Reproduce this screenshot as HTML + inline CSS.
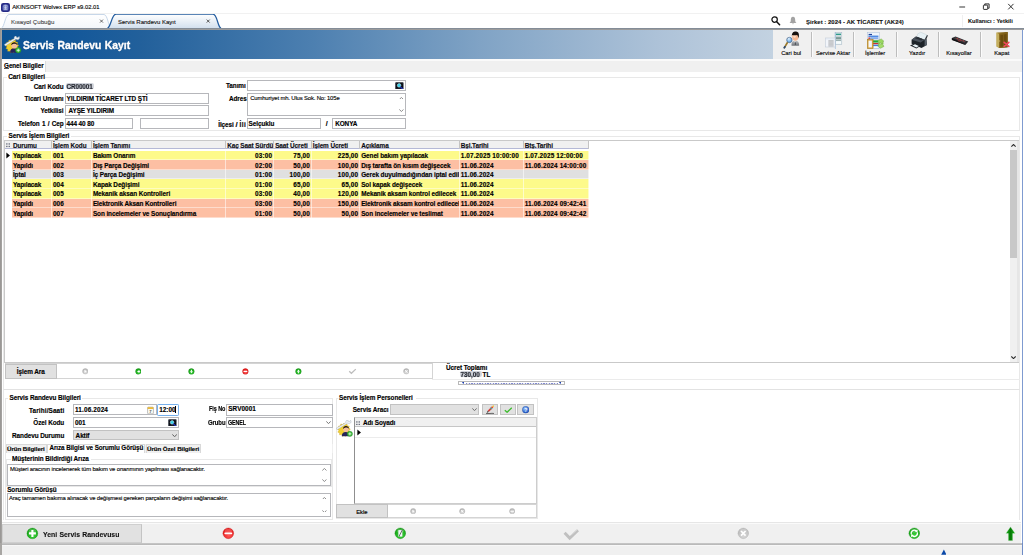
<!DOCTYPE html><html lang="tr"><head><meta charset="utf-8"><title>Servis Randevu Kayıt</title><style>
html,body{margin:0;padding:0;background:#fff;}
body{width:1024px;height:557px;position:relative;overflow:hidden;font-family:"Liberation Sans",sans-serif;font-size:6.2px;color:#000;}
div,svg{position:absolute;box-sizing:border-box;}
.t{white-space:nowrap;}
.b{font-weight:bold;font-size:6.4px;letter-spacing:-0.08px;color:#000;-webkit-text-stroke:0.14px #000;}
.n{font-weight:normal;font-size:5.8px;color:#111;-webkit-text-stroke:0.14px #111;}
.in{background:#fff;border:0.8px solid #b6b7bb;}
.g{background:#e1e1e1;border:0.7px solid #c2c2c2;}
.ln{background:#dcdcdc;}
</style></head><body>
<svg style="left:1px;top:2.500px" width="9" height="9" viewBox="0 0 18 18"><rect x="0" y="0" width="18" height="18" rx="4.500" fill="#262a86"/><rect x="3.200" y="3.200" width="11.600" height="11.600" rx="3" fill="#6f7cc0"/><path d="M5.500 6.500l3.500-2 3.500 2M6 9.500h6M6 12.500h6M9 5v8" stroke="#dfe3f6" stroke-width="1.200" fill="none"/></svg>
<div class="t n" style="left:12.2px;top:3.45px;line-height:8px;font-size:5.85px;color:#000;">AKINSOFT Wolvex ERP s9.02.01</div>
<svg style="left:955px;top:1px" width="64" height="12" viewBox="0 0 64 12"><path d="M4.300 6h5.800" stroke="#111" stroke-width="0.85" fill="none"/><rect x="28.400" y="4.100" width="4.300" height="4.300" rx=".6" fill="none" stroke="#111" stroke-width="0.85"/><path d="M29.800 4.100v-1.200h4.300v4.300h-1.300" fill="none" stroke="#111" stroke-width="0.85"/><path d="M53.200 2.900l5.300 5.500M58.500 2.900l-5.300 5.500" stroke="#111" stroke-width="0.85" fill="none"/></svg>
<svg style="left:0;top:13px" width="240" height="16" viewBox="0 0 240 16">
<defs><linearGradient id="tg" x1="0" y1="0" x2="0" y2="1"><stop offset="0" stop-color="#ffffff"/><stop offset="1" stop-color="#d3e0ee"/></linearGradient>
<linearGradient id="tg0" x1="0" y1="0" x2="0" y2="1"><stop offset="0" stop-color="#ffffff"/><stop offset="1" stop-color="#f3f6fa"/></linearGradient></defs>
<path d="M1.5 15 C4.5 14 5 2 9 1.5 L104 1.5 C108 2 108 14 111.5 15" fill="url(#tg0)" stroke="#b9cde3" stroke-width="0.8"/>
<path d="M107.5 15.2 C111 14 111.5 1.5 116 1.2 L213 1.2 C217.5 1.5 217.5 14 221 15.2" fill="url(#tg)" stroke="#235c9f" stroke-width="1.25"/>
<path d="M100 6.600l3 3M103 6.600l-3 3" stroke="#444" stroke-width="0.8"/>
<path d="M206.700 6.600l3 3M209.700 6.600l-3 3" stroke="#333" stroke-width="0.8"/>
</svg>
<div class="t n" style="left:11px;top:17.85px;line-height:8px;font-size:6.15px;color:#777;">Kısayol Çubuğu</div>
<div class="t n" style="left:118px;top:17.95px;line-height:8px;font-size:6.0px;color:#222;">Servis Randevu Kayıt</div>
<svg style="left:770px;top:15px" width="30" height="12" viewBox="0 0 30 12"><circle cx="4.6" cy="4.6" r="2.7" fill="none" stroke="#111" stroke-width="1.2"/><path d="M6.7 6.8l2.9 3" stroke="#111" stroke-width="1.5" stroke-linecap="round"/><path d="M23 1.8c1.8 0 2.2 1.8 2.2 3.4 0 1.5 .6 2.2 1.3 2.8h-7c.7-.6 1.3-1.3 1.3-2.8 0-1.6 .4-3.4 2.2-3.4zM22.1 8.6h1.8c0 1-1.8 1-1.8 0z" fill="#a3a3a3"/></svg>
<div class="t b" style="left:806px;top:17.55px;line-height:8px;font-size:6.0px;color:#111;-webkit-text-stroke:0.08px #111;letter-spacing:0;">Şirket : 2024 - AK TİCARET (AK24)</div>
<div class="" style="left:962px;top:15px;width:0.7px;height:12px;background:#efefef;"></div>
<div class="" style="left:0px;top:13.1px;width:1024px;height:0.7px;background:#f1f1f1;"></div>
<div class="t b" style="left:968px;top:17.25px;line-height:8px;font-size:5.65px;color:#111;-webkit-text-stroke:0.08px #111;letter-spacing:0;">Kullanıcı : Yetkili</div>
<div class="" style="left:0px;top:27.9px;width:1024px;height:2px;background:linear-gradient(180deg,#7b8998 0%,#8a9098 45%,#a9a49e 100%);"></div>
<div class="" style="left:0px;top:28px;width:1.6px;height:527px;background:linear-gradient(90deg,#9a9896 0 65%,#bdbbb9 100%);"></div>
<div class="" style="left:1022px;top:29.5px;width:0.9px;height:514px;background:#7f9bd0;"></div>
<div class="" style="left:1.6px;top:29.8px;width:771.4px;height:29.3px;background:linear-gradient(90deg,#0b5294 0%,#12579a 8%,#22609b 18%,#4c7fb0 40%,#80a3c5 62%,#adc2d8 85%,#c3d2e1 100%);"></div>
<div class="" style="left:772.8px;top:29.5px;width:249px;height:29.6px;background:#f0f0f0;"></div>
<div class="" style="left:1.6px;top:59px;width:1020.4px;height:2px;background:#fafafa;"></div>
<svg style="left:3.6px;top:36.3px" width="18" height="18" viewBox="0 0 36 36">
<path d="M17 5l2.200 3.200 3.600-1.400.6 3.800 3.800.4-1.200 3.600 3.200 2-2.600 2.800 2 3.200-3.600 1.400.2 3.800-3.800-.4-1.600 3.400-3-2.200-3 2.200-1.600-3.400-3.800.4.2-3.800-3.600-1.400 2-3.200-2.600-2.800 3.200-2-1.200-3.600 3.800-.4.6-3.800 3.600 1.400z" fill="#f0d030" stroke="#c8a018" stroke-width=".8" transform="translate(-1.500,1) scale(1.060)"/>
<path d="M12 33.500c0-6.500 3-9 8-9s6 2.500 6 9z" fill="#26245a"/>
<circle cx="20.500" cy="19" r="5.800" fill="#f4bf9c"/>
<path d="M14.300 18.500c.2-7.500 11.500-8.500 12.700 0-2.500-3.500-7.500-4.500-12.700 0z" fill="#1a120c"/>
<path d="M0.500 16.800L20.500 5.200c-1.200-2.800 1-5.200 3.800-5.400l.6 2.800 3.200.4 2-2.400c1.800 2.400 1 5.800-2.200 6.800-1.600.5-3 .1-4-.8L2.500 20.200z" fill="#eef1f5" stroke="#8f99a6" stroke-width=".7"/>
<circle cx="28.500" cy="28.500" r="5.400" fill="#3bb83b" stroke="#1d7f1d" stroke-width=".9"/>
<path d="M25.500 28.500h6M28.500 25.500v6" stroke="#e4f6e4" stroke-width="1.800"/>
</svg>
<div class="t" style="left:22.5px;top:37px;line-height:16px;font-size:11.1px;font-weight:bold;color:#fff;-webkit-text-stroke:0.35px #fff;word-spacing:0.6px;transform-origin:0 50%;transform:scaleX(0.935);text-shadow:0.3px 0.4px 0.8px rgba(0,0,40,.4);">Servis Randevu Kayıt</div>
<div class="" style="left:811.2px;top:32px;width:0.8px;height:25px;background:#bdbdbd;"></div>
<div class="" style="left:812.0px;top:32px;width:0.6px;height:25px;background:#fbfbfb;"></div>
<div class="" style="left:853.4px;top:32px;width:0.8px;height:25px;background:#bdbdbd;"></div>
<div class="" style="left:854.1999999999999px;top:32px;width:0.6px;height:25px;background:#fbfbfb;"></div>
<div class="" style="left:895.9px;top:32px;width:0.8px;height:25px;background:#bdbdbd;"></div>
<div class="" style="left:896.6999999999999px;top:32px;width:0.6px;height:25px;background:#fbfbfb;"></div>
<div class="" style="left:938.0px;top:32px;width:0.8px;height:25px;background:#bdbdbd;"></div>
<div class="" style="left:938.8px;top:32px;width:0.6px;height:25px;background:#fbfbfb;"></div>
<div class="" style="left:980.2px;top:32px;width:0.8px;height:25px;background:#bdbdbd;"></div>
<div class="" style="left:981.0px;top:32px;width:0.6px;height:25px;background:#fbfbfb;"></div>
<div class="t n" style="left:766.2px;top:49.45px;line-height:8px;width:50px;text-align:center;font-size:5.8px;color:#000;">Cari bul</div>
<div class="t n" style="left:808px;top:49.45px;line-height:8px;width:50px;text-align:center;font-size:5.8px;color:#000;">Servise Aktar</div>
<div class="t n" style="left:850.1px;top:49.45px;line-height:8px;width:50px;text-align:center;font-size:5.8px;color:#000;">İşlemler</div>
<div class="t n" style="left:892.1px;top:49.45px;line-height:8px;width:50px;text-align:center;font-size:5.8px;color:#000;">Yazdır</div>
<div class="t n" style="left:933.9px;top:49.45px;line-height:8px;width:50px;text-align:center;font-size:5.8px;color:#000;">Kısayollar</div>
<div class="t n" style="left:976.8px;top:49.45px;line-height:8px;width:50px;text-align:center;font-size:5.8px;color:#000;">Kapat</div>
<svg style="left:776px;top:30px" width="32" height="22" viewBox="0 0 32 22"><defs><radialGradient id="lens" cx=".4" cy=".35" r=".7"><stop offset="0" stop-color="#d4ecff"/><stop offset="1" stop-color="#3f8fd8"/></radialGradient>
<linearGradient id="suit" x1="0" y1="0" x2="0" y2="1"><stop offset="0" stop-color="#b9bcc0"/><stop offset="1" stop-color="#6f7378"/></linearGradient></defs>
<path d="M15.400 15.400c0-3.200 1.400-4.600 3.900-4.600s3.900 1.400 3.900 4.600c-1.500.5-6.300.5-7.800 0z" fill="url(#suit)"/>
<path d="M18.400 10.900l.9 2.400.9-2.400z" fill="#f4f4f4"/><path d="M19.100 11.600h.4l.3 2.900-.5.600-.5-.6z" fill="#3a3d44"/>
<ellipse cx="19.300" cy="7" rx="3.100" ry="3.700" fill="#f6b892"/>
<ellipse cx="18.600" cy="6.200" rx="1.300" ry="1.700" fill="#fde0cc" opacity=".8"/>
<path d="M15.900 6.200c-.3-3.600 2.200-4.900 4.300-4.600 2 .2 3 1.700 2.700 4.500-.1 1-.4 1.800-.7 2.300.1-1.600-.3-2.900-1.200-3.500-1.300.6-3.400.5-4.600.2-.3.400-.4.800-.5 1.100z" fill="#15110f"/>
<path d="M11.300 12.700L8.400 17.600" stroke="#9c7a2c" stroke-width="1.700" stroke-linecap="round"/>
<path d="M8.900 16.800l-.6 1" stroke="#2a4a78" stroke-width="1.700" stroke-linecap="round"/>
<circle cx="13.400" cy="10" r="2.700" fill="url(#lens)" stroke="#5a6f8a" stroke-width=".7"/>
<path d="M12 9.300a1.800 1.800 0 0 1 1.600-1.200" stroke="#fff" stroke-width=".6" fill="none" opacity=".9"/></svg>
<svg style="left:818px;top:30px" width="32" height="22" viewBox="0 0 32 22"><rect x="17.100" y="2.500" width="6.700" height="12" fill="#e8f0f1" stroke="#9fb4c4" stroke-width=".5"/>
<rect x="17.900" y="3.600" width="5.100" height="1.500" fill="#2f9a8c"/>
<rect x="17.900" y="5.700" width="5.100" height="1" fill="#b9c6c8"/>
<rect x="17.900" y="7.200" width="5.100" height="1.700" fill="#6f8f8c"/>
<rect x="17.900" y="9.500" width="5.100" height="1.300" fill="#8ea5a4"/>
<rect x="17.900" y="11.400" width="5.100" height="2.300" fill="#f6fbfc"/>
<path d="M17.400 2.500v16.500" stroke="#8fb3d6" stroke-width=".6"/>
<rect x="7.300" y="8" width="9.800" height="9" fill="#f2f5fa" stroke="#b8c2d0" stroke-width=".5"/>
<rect x="7.600" y="8.300" width="9.200" height="1.100" fill="#dfe6f0"/>
<rect x="10.400" y="10" width="5.200" height="6.700" fill="#c3c5c9"/>
<path d="M10.400 11.200h5.200M10.400 12.600h5.200M10.400 14h5.200M10.400 15.400h5.200" stroke="#d9dbde" stroke-width=".4"/></svg>
<svg style="left:860px;top:30px" width="32" height="22" viewBox="0 0 32 22"><rect x="7.300" y="2.500" width="12.400" height="15.800" fill="#eef4fb" stroke="#a9bcd6" stroke-width=".5"/>
<rect x="8.600" y="3.900" width="3.400" height="1.200" fill="#1c3f9a"/>
<rect x="8.400" y="5.600" width="10" height="1.300" fill="#3f7fe0"/>
<rect x="8.400" y="7.400" width="2" height="2.400" fill="#d04040"/><rect x="10.600" y="7.400" width="7.800" height="1.300" fill="#5a90e4"/>
<rect x="12.600" y="9.700" width="6.400" height="8.500" fill="#f6f8fc" stroke="#a9bcd6" stroke-width=".4"/>
<rect x="13" y="10.300" width="5.600" height="2.300" fill="#1fa83a"/>
<rect x="13" y="13" width="5.600" height="1.300" fill="#c83232"/>
<rect x="13" y="14.700" width="5.600" height="1.400" fill="#3f7fe0"/>
<rect x="7.300" y="9.200" width="5.800" height="9.400" fill="#d9a63c" stroke="#a87818" stroke-width=".5"/>
<rect x="8.500" y="10.600" width="3.400" height="6.800" fill="#f4f6fa"/>
<rect x="9.200" y="8.700" width="2" height="1.100" fill="#8f96a4"/>
<path d="M17.600 10.800l3.600-1.900 2.700 2.300-1.300.7 1 1.300-1.700 1-1-1.400-1.600.8z" fill="#9bd860" stroke="#5aa02c" stroke-width=".4"/>
<path d="M24 16.400l-3.600 1.900-2.700-2.300 1.300-.7-1-1.300 1.700-1 1 1.400 1.600-.8z" fill="#a4dc6a" stroke="#5aa02c" stroke-width=".4"/></svg>
<svg style="left:902px;top:30px" width="32" height="22" viewBox="0 0 32 22"><path d="M15.400 4.200l3.300-2 6.300 2.800-2.800 5.600-6.800-2.200z" fill="#e6f0f4" stroke="#b5c4cc" stroke-width=".4"/>
<path d="M22.200 10.400l2.800-5.500 .9 .5-2.300 5.500z" fill="#2b3036"/>
<path d="M9.600 9.800l4.400-3.200 8.600 3.200 1.800-.9 .5 6-5.400 3.200-9.900-4.300z" fill="#1d2329"/>
<path d="M9.600 9.800l4.400-3.200 8.600 3.200-4 2.600z" fill="#4a525c"/>
<path d="M13 8.200l2.400-1.200 5.800 2.200-2 1.300z" fill="#2a3038"/>
<path d="M22.600 9.800l1.800-.9 .5 6-2.300 1.400z" fill="#59626c"/>
<path d="M8 15.600l4.200-2 5.800 2.600-3.600 2.400z" fill="#23282e"/>
<path d="M10.400 15.500l2.600-1.200 3.800 1.700-2.400 1.500z" fill="#e8f2f6"/></svg>
<svg style="left:944px;top:30px" width="32" height="22" viewBox="0 0 32 22"><path d="M7.900 8l3.600-1.400 12.600 4.800-2.800 3.300-13.400-5z" fill="#2c2c30"/>
<path d="M7.900 8.100v1.800l13.400 5 2.800-3.300v-.4l-2.800 3.300z" fill="#121214"/>
<path d="M9.600 8l2-.7 10.400 4-1.300 1.500z" fill="#4a4448"/>
<path d="M12.600 8.400l1.600.6M15.400 9.600l2.200.9M18.800 10.600l1.600.6" stroke="#c43a3a" stroke-width=".9"/>
<path d="M13.800 10.400l2.400.9" stroke="#a03030" stroke-width=".8"/></svg>
<svg style="left:986px;top:30px" width="32" height="22" viewBox="0 0 32 22"><defs><linearGradient id="door" x1="0" y1="0" x2="1" y2="0"><stop offset="0" stop-color="#bda450"/><stop offset=".18" stop-color="#9a7c2a"/><stop offset="1" stop-color="#6c5010"/></linearGradient></defs>
<path d="M10.500 2.600l11.200-.6v15.200l-8.400 .8-2.800-1.400z" fill="url(#door)"/>
<path d="M10.500 2.600l2.800 1.400v14l-2.800-1.400z" fill="#c4ae5e"/>
<path d="M13.300 4l8.400-2v15.200l-8.400 .8z" fill="#806018"/>
<path d="M14.400 5.200l2.600-.5v11.700l-2.600 .3zM17.800 4.500l2.800-.6v12l-2.800 .4z" fill="#6a4c0e"/>
<path d="M13.700 10.200v1.600" stroke="#e0d090" stroke-width=".5"/>
<path d="M18.200 12.300l4.600 4.100M22.800 12.300l-4.600 4.100" stroke="#f0485a" stroke-width="1.700" stroke-linecap="round"/></svg>
<div class="" style="left:1.6px;top:61px;width:1020.4px;height:10.6px;background:#f0f0f0;"></div>
<div class="" style="left:1.6px;top:60.6px;width:44.8px;height:11px;background:#fff;border-right:0.7px solid #dcdcdc;"></div>
<div class="t b" style="left:4.1px;top:61.95px;line-height:8px;font-size:6.3px;">Genel Bilgiler</div>
<div class="" style="left:4.3px;top:68.3px;width:4.4px;height:0.45px;background:#555;"></div>
<div class="" style="left:3.2px;top:77.1px;width:1016.8px;height:54.2px;border:0.8px solid #e8e8e8;"></div>
<div class="" style="left:6.800000000000001px;top:74.1px;width:38.5px;height:6px;background:#fff;"></div>
<div class="t b" style="left:8.3px;top:73.05px;line-height:8px;">Cari Bilgileri</div>
<div class="t b" style="right:960.5px;top:82.55px;line-height:8px;">Cari Kodu</div>
<div class="" style="left:66px;top:83.4px;width:27.5px;height:5.8px;background:#d4d7de;border-radius:2px;filter:blur(0.5px);"></div>
<div class="t b" style="left:66.4px;top:82.55px;line-height:8px;font-size:6.4px;color:#2a2f3c;filter:blur(0.35px);letter-spacing:-0.1px;text-shadow:0 0 0.5px #fff,0 0 1.2px #8a90a0;">CR00001</div>
<div class="t b" style="right:960.5px;top:94.75px;line-height:8px;">Ticari Unvanı</div>
<div class="in" style="left:65px;top:92.8px;width:143.7px;height:11.1px;"></div>
<div class="t b" style="left:66.5px;top:94.75px;line-height:8px;">YILDIRIM TİCARET LTD ŞTİ</div>
<div class="t b" style="right:960.5px;top:106.85px;line-height:8px;">Yetkilisi</div>
<div class="in" style="left:65px;top:105.2px;width:143.7px;height:11.2px;"></div>
<div class="t b" style="left:68.5px;top:106.85px;line-height:8px;">AYŞE YILDIRIM</div>
<div class="t b" style="right:960.5px;top:119.95px;line-height:8px;word-spacing:0.6px;">Telefon 1 / Cep</div>
<div class="in" style="left:65px;top:118.1px;width:67.7px;height:10.7px;"></div>
<div class="t b" style="left:66.5px;top:119.95px;line-height:8px;">444 40 80</div>
<div class="in" style="left:140px;top:118.1px;width:68.7px;height:10.7px;"></div>
<div style="left:200px;top:78px;width:47.3px;height:52px;overflow:hidden;">
<div class="t b" style="left:26px;top:4px;line-height:8px;">Tanımı</div>
<div class="t b" style="left:29px;top:17.35px;line-height:8px;">Adres</div>
<div class="t b" style="left:18.2px;top:42.9px;line-height:8px;">İlçesi<span style="font-size:7.8px;margin:0 2px 0 1.700px;">/</span><span style="letter-spacing:0.500px;">İli</span></div>
</div>
<div class="in" style="left:246.9px;top:80.1px;width:159.4px;height:10.9px;"></div>
<svg style="left:395.3px;top:81.8px" width="8.8" height="7.6" viewBox="0 0 17.600 15.200"><rect x="0.500" y="0.500" width="16.600" height="14.200" rx="1.500" fill="#1e2430"/><path d="M2 13V5l2.500-3h3l1 2.500h1l1-2.500h3L16 5v8z" fill="#0c0f16"/><circle cx="8.200" cy="6.800" r="3.600" fill="#35d0e8" stroke="#d8f4fa" stroke-width="1"/><path d="M10.800 9.600l4.600 4.400" stroke="#2438c8" stroke-width="2.200" stroke-linecap="round"/></svg>
<div class="in" style="left:246.9px;top:93.3px;width:159.4px;height:22.6px;"></div>
<div class="t n" style="left:250.2px;top:94.35px;line-height:8px;font-size:5.9px;letter-spacing:-0.14px;color:#000;">Cumhuriyet mh. Ulus Sok. No: 105e</div>
<svg style="left:398.8px;top:96.52px" width="4.8" height="2.96" viewBox="0 0 6 3.7"><path d="M0.4 3.1L3 0.6L5.6 3.1" fill="none" stroke="#6e6e6e" stroke-width="1.0"/></svg>
<svg style="left:398.8px;top:109.32px" width="4.8" height="2.96" viewBox="0 0 6 3.7"><path d="M0.4 0.6L3 3.1L5.6 0.6" fill="none" stroke="#6e6e6e" stroke-width="1.0"/></svg>
<div class="in" style="left:246.9px;top:118.3px;width:73.7px;height:10.8px;"></div>
<div class="t b" style="left:248.6px;top:119.55px;line-height:8px;">Selçuklu</div>
<div class="t b" style="left:325.8px;top:119.85px;line-height:8px;font-size:7px;">/</div>
<div class="in" style="left:332.2px;top:118.3px;width:74.1px;height:10.8px;"></div>
<div class="t b" style="left:335.2px;top:119.55px;line-height:8px;">KONYA</div>
<div class="" style="left:3.2px;top:135.6px;width:1016.8px;height:254px;border:0.8px solid #e8e8e8;border-bottom-color:#e2e2e2;"></div>
<div class="" style="left:3.2px;top:389.6px;width:1016.8px;height:130.2px;border:0.8px solid #e8e8e8;border-bottom:none;border-top:none;"></div>
<div class="" style="left:7px;top:132.5px;width:64px;height:6px;background:#fff;"></div>
<div class="t b" style="left:8.5px;top:132.15px;line-height:8px;">Servis İşlem Bilgileri</div>
<div class="" style="left:4px;top:140px;width:1015px;height:222.6px;border:0.8px solid #c9c9c9;background:#fff;"></div>
<div class="" style="left:4.8px;top:141.2px;width:584.3px;height:8.3px;background:#f0f0f0;border-bottom:0.8px solid #b5b9d6;"></div>
<svg style="left:6px;top:143px" width="4.4" height="4.6" viewBox="0 0 4.4 4.6"><g fill="#5c6272"><rect x="0.2" y="0.3" width="1.3" height="1.3"/><rect x="2.6" y="0.3" width="1.3" height="1.3"/><rect x="0.2" y="2.8" width="1.3" height="1.3"/><rect x="2.6" y="2.8" width="1.3" height="1.3"/></g></svg>
<div style="left:11.7px;top:141.2px;width:40.0px;height:8.3px;overflow:hidden;border-right:0.8px solid #c4c4c4;"><div class="t b" style="left:1.2px;top:1.1px;line-height:8px;color:#10101c;">Durumu</div></div>
<div style="left:51.7px;top:141.2px;width:40.0px;height:8.3px;overflow:hidden;border-right:0.8px solid #c4c4c4;"><div class="t b" style="left:1.2px;top:1.1px;line-height:8px;color:#10101c;">İşlem Kodu</div></div>
<div style="left:91.7px;top:141.2px;width:134.3px;height:8.3px;overflow:hidden;border-right:0.8px solid #c4c4c4;"><div class="t b" style="left:1.2px;top:1.1px;line-height:8px;color:#10101c;">İşlem Tanımı</div></div>
<div style="left:226px;top:141.2px;width:48px;height:8.3px;overflow:hidden;border-right:0.8px solid #c4c4c4;"><div class="t b" style="left:1.2px;top:1.1px;line-height:8px;color:#10101c;">Kaç Saat Sürdü</div></div>
<div style="left:274px;top:141.2px;width:37.6px;height:8.3px;overflow:hidden;border-right:0.8px solid #c4c4c4;"><div class="t b" style="left:1.2px;top:1.1px;line-height:8px;color:#10101c;">Saat Ücreti</div></div>
<div style="left:311.6px;top:141.2px;width:48.4px;height:8.3px;overflow:hidden;border-right:0.8px solid #c4c4c4;"><div class="t b" style="left:1.2px;top:1.1px;line-height:8px;color:#10101c;">İşlem Ücreti</div></div>
<div style="left:360px;top:141.2px;width:99.5px;height:8.3px;overflow:hidden;border-right:0.8px solid #c4c4c4;"><div class="t b" style="left:1.2px;top:1.1px;line-height:8px;color:#10101c;">Açıklama</div></div>
<div style="left:459.5px;top:141.2px;width:64.0px;height:8.3px;overflow:hidden;border-right:0.8px solid #c4c4c4;"><div class="t b" style="left:1.2px;top:1.1px;line-height:8px;color:#10101c;">Bşl.Tarihi</div></div>
<div style="left:523.5px;top:141.2px;width:65.6px;height:8.3px;overflow:hidden;border-right:0.8px solid #c4c4c4;"><div class="t b" style="left:1.2px;top:1.1px;line-height:8px;color:#10101c;">Btş.Tarihi</div></div>
<div class="" style="left:11.7px;top:150.6px;width:577.2px;height:9.67px;background:#fdfa8a;border-bottom:0.5px solid rgba(255,255,255,.45);"></div>
<div style="left:11.7px;top:150.6px;width:40.0px;height:9.62px;overflow:hidden;border-right:0.7px solid rgba(255,255,255,.55);"><div class="t b" style="left:1.2px;top:1.35px;line-height:8px;">Yapılacak</div></div>
<div style="left:51.7px;top:150.6px;width:40.0px;height:9.62px;overflow:hidden;border-right:0.7px solid rgba(255,255,255,.55);"><div class="t b" style="left:1.2px;top:1.35px;line-height:8px;letter-spacing:0.14px;">001</div></div>
<div style="left:91.7px;top:150.6px;width:134.3px;height:9.62px;overflow:hidden;border-right:0.7px solid rgba(255,255,255,.55);"><div class="t b" style="left:1.2px;top:1.35px;line-height:8px;">Bakım Onarım</div></div>
<div style="left:226px;top:150.6px;width:48px;height:9.62px;overflow:hidden;border-right:0.7px solid rgba(255,255,255,.55);"><div class="t b" style="right:0.9px;top:1.35px;line-height:8px;letter-spacing:0.14px;">03:00</div></div>
<div style="left:274px;top:150.6px;width:37.6px;height:9.62px;overflow:hidden;border-right:0.7px solid rgba(255,255,255,.55);"><div class="t b" style="right:0.6px;top:1.35px;line-height:8px;letter-spacing:0.14px;">75,00</div></div>
<div style="left:311.6px;top:150.6px;width:48.4px;height:9.62px;overflow:hidden;border-right:0.7px solid rgba(255,255,255,.55);"><div class="t b" style="right:0.8px;top:1.35px;line-height:8px;letter-spacing:0.14px;">225,00</div></div>
<div style="left:360px;top:150.6px;width:99.5px;height:9.62px;overflow:hidden;border-right:0.7px solid rgba(255,255,255,.55);"><div class="t b" style="left:1.2px;top:1.35px;line-height:8px;">Genel bakım yapılacak</div></div>
<div style="left:459.5px;top:150.6px;width:64.0px;height:9.62px;overflow:hidden;border-right:0.7px solid rgba(255,255,255,.55);"><div class="t b" style="left:1.2px;top:1.35px;line-height:8px;letter-spacing:0.14px;">1.07.2025 10:00:00</div></div>
<div style="left:523.5px;top:150.6px;width:65.6px;height:9.62px;overflow:hidden;border-right:0.7px solid rgba(255,255,255,.55);"><div class="t b" style="left:1.2px;top:1.35px;line-height:8px;letter-spacing:0.14px;">1.07.2025 12:00:00</div></div>
<div class="" style="left:11.7px;top:160.22px;width:577.2px;height:9.67px;background:#fdbfa3;border-bottom:0.5px solid rgba(255,255,255,.45);"></div>
<div style="left:11.7px;top:160.22px;width:40.0px;height:9.62px;overflow:hidden;border-right:0.7px solid rgba(255,255,255,.55);"><div class="t b" style="left:1.2px;top:1.35px;line-height:8px;">Yapıldı</div></div>
<div style="left:51.7px;top:160.22px;width:40.0px;height:9.62px;overflow:hidden;border-right:0.7px solid rgba(255,255,255,.55);"><div class="t b" style="left:1.2px;top:1.35px;line-height:8px;letter-spacing:0.14px;">002</div></div>
<div style="left:91.7px;top:160.22px;width:134.3px;height:9.62px;overflow:hidden;border-right:0.7px solid rgba(255,255,255,.55);"><div class="t b" style="left:1.2px;top:1.35px;line-height:8px;">Dış Parça Değişimi</div></div>
<div style="left:226px;top:160.22px;width:48px;height:9.62px;overflow:hidden;border-right:0.7px solid rgba(255,255,255,.55);"><div class="t b" style="right:0.9px;top:1.35px;line-height:8px;letter-spacing:0.14px;">02:00</div></div>
<div style="left:274px;top:160.22px;width:37.6px;height:9.62px;overflow:hidden;border-right:0.7px solid rgba(255,255,255,.55);"><div class="t b" style="right:0.6px;top:1.35px;line-height:8px;letter-spacing:0.14px;">50,00</div></div>
<div style="left:311.6px;top:160.22px;width:48.4px;height:9.62px;overflow:hidden;border-right:0.7px solid rgba(255,255,255,.55);"><div class="t b" style="right:0.8px;top:1.35px;line-height:8px;letter-spacing:0.14px;">100,00</div></div>
<div style="left:360px;top:160.22px;width:99.5px;height:9.62px;overflow:hidden;border-right:0.7px solid rgba(255,255,255,.55);"><div class="t b" style="left:1.2px;top:1.35px;line-height:8px;">Dış tarafta ön kısım değişecek</div></div>
<div style="left:459.5px;top:160.22px;width:64.0px;height:9.62px;overflow:hidden;border-right:0.7px solid rgba(255,255,255,.55);"><div class="t b" style="left:1.2px;top:1.35px;line-height:8px;letter-spacing:0.14px;">11.06.2024</div></div>
<div style="left:523.5px;top:160.22px;width:65.6px;height:9.62px;overflow:hidden;border-right:0.7px solid rgba(255,255,255,.55);"><div class="t b" style="left:1.2px;top:1.35px;line-height:8px;letter-spacing:0.14px;">11.06.2024 14:00:00</div></div>
<div class="" style="left:11.7px;top:169.84px;width:577.2px;height:9.67px;background:#e0e0e0;border-bottom:0.5px solid rgba(255,255,255,.45);"></div>
<div style="left:11.7px;top:169.84px;width:40.0px;height:9.62px;overflow:hidden;border-right:0.7px solid rgba(255,255,255,.55);"><div class="t b" style="left:1.2px;top:1.35px;line-height:8px;">İptal</div></div>
<div style="left:51.7px;top:169.84px;width:40.0px;height:9.62px;overflow:hidden;border-right:0.7px solid rgba(255,255,255,.55);"><div class="t b" style="left:1.2px;top:1.35px;line-height:8px;letter-spacing:0.14px;">003</div></div>
<div style="left:91.7px;top:169.84px;width:134.3px;height:9.62px;overflow:hidden;border-right:0.7px solid rgba(255,255,255,.55);"><div class="t b" style="left:1.2px;top:1.35px;line-height:8px;">İç Parça Değişimi</div></div>
<div style="left:226px;top:169.84px;width:48px;height:9.62px;overflow:hidden;border-right:0.7px solid rgba(255,255,255,.55);"><div class="t b" style="right:0.9px;top:1.35px;line-height:8px;letter-spacing:0.14px;">01:00</div></div>
<div style="left:274px;top:169.84px;width:37.6px;height:9.62px;overflow:hidden;border-right:0.7px solid rgba(255,255,255,.55);"><div class="t b" style="right:0.6px;top:1.35px;line-height:8px;letter-spacing:0.14px;">100,00</div></div>
<div style="left:311.6px;top:169.84px;width:48.4px;height:9.62px;overflow:hidden;border-right:0.7px solid rgba(255,255,255,.55);"><div class="t b" style="right:0.8px;top:1.35px;line-height:8px;letter-spacing:0.14px;">100,00</div></div>
<div style="left:360px;top:169.84px;width:99.5px;height:9.62px;overflow:hidden;border-right:0.7px solid rgba(255,255,255,.55);"><div class="t b" style="left:1.2px;top:1.35px;line-height:8px;">Gerek duyulmadığından iptal edildi</div></div>
<div style="left:459.5px;top:169.84px;width:64.0px;height:9.62px;overflow:hidden;border-right:0.7px solid rgba(255,255,255,.55);"><div class="t b" style="left:1.2px;top:1.35px;line-height:8px;letter-spacing:0.14px;">11.06.2024</div></div>
<div style="left:523.5px;top:169.84px;width:65.6px;height:9.62px;overflow:hidden;border-right:0.7px solid rgba(255,255,255,.55);"><div class="t b" style="left:1.2px;top:1.35px;line-height:8px;letter-spacing:0.14px;"></div></div>
<div class="" style="left:11.7px;top:179.46px;width:577.2px;height:9.67px;background:#fdfa8a;border-bottom:0.5px solid rgba(255,255,255,.45);"></div>
<div style="left:11.7px;top:179.46px;width:40.0px;height:9.62px;overflow:hidden;border-right:0.7px solid rgba(255,255,255,.55);"><div class="t b" style="left:1.2px;top:1.35px;line-height:8px;">Yapılacak</div></div>
<div style="left:51.7px;top:179.46px;width:40.0px;height:9.62px;overflow:hidden;border-right:0.7px solid rgba(255,255,255,.55);"><div class="t b" style="left:1.2px;top:1.35px;line-height:8px;letter-spacing:0.14px;">004</div></div>
<div style="left:91.7px;top:179.46px;width:134.3px;height:9.62px;overflow:hidden;border-right:0.7px solid rgba(255,255,255,.55);"><div class="t b" style="left:1.2px;top:1.35px;line-height:8px;">Kapak Değişimi</div></div>
<div style="left:226px;top:179.46px;width:48px;height:9.62px;overflow:hidden;border-right:0.7px solid rgba(255,255,255,.55);"><div class="t b" style="right:0.9px;top:1.35px;line-height:8px;letter-spacing:0.14px;">01:00</div></div>
<div style="left:274px;top:179.46px;width:37.6px;height:9.62px;overflow:hidden;border-right:0.7px solid rgba(255,255,255,.55);"><div class="t b" style="right:0.6px;top:1.35px;line-height:8px;letter-spacing:0.14px;">65,00</div></div>
<div style="left:311.6px;top:179.46px;width:48.4px;height:9.62px;overflow:hidden;border-right:0.7px solid rgba(255,255,255,.55);"><div class="t b" style="right:0.8px;top:1.35px;line-height:8px;letter-spacing:0.14px;">65,00</div></div>
<div style="left:360px;top:179.46px;width:99.5px;height:9.62px;overflow:hidden;border-right:0.7px solid rgba(255,255,255,.55);"><div class="t b" style="left:1.2px;top:1.35px;line-height:8px;">Sol kapak değişecek</div></div>
<div style="left:459.5px;top:179.46px;width:64.0px;height:9.62px;overflow:hidden;border-right:0.7px solid rgba(255,255,255,.55);"><div class="t b" style="left:1.2px;top:1.35px;line-height:8px;letter-spacing:0.14px;">11.06.2024</div></div>
<div style="left:523.5px;top:179.46px;width:65.6px;height:9.62px;overflow:hidden;border-right:0.7px solid rgba(255,255,255,.55);"><div class="t b" style="left:1.2px;top:1.35px;line-height:8px;letter-spacing:0.14px;"></div></div>
<div class="" style="left:11.7px;top:189.08px;width:577.2px;height:9.67px;background:#fdfa8a;border-bottom:0.5px solid rgba(255,255,255,.45);"></div>
<div style="left:11.7px;top:189.08px;width:40.0px;height:9.62px;overflow:hidden;border-right:0.7px solid rgba(255,255,255,.55);"><div class="t b" style="left:1.2px;top:1.35px;line-height:8px;">Yapılacak</div></div>
<div style="left:51.7px;top:189.08px;width:40.0px;height:9.62px;overflow:hidden;border-right:0.7px solid rgba(255,255,255,.55);"><div class="t b" style="left:1.2px;top:1.35px;line-height:8px;letter-spacing:0.14px;">005</div></div>
<div style="left:91.7px;top:189.08px;width:134.3px;height:9.62px;overflow:hidden;border-right:0.7px solid rgba(255,255,255,.55);"><div class="t b" style="left:1.2px;top:1.35px;line-height:8px;">Mekanik aksan Kontrolleri</div></div>
<div style="left:226px;top:189.08px;width:48px;height:9.62px;overflow:hidden;border-right:0.7px solid rgba(255,255,255,.55);"><div class="t b" style="right:0.9px;top:1.35px;line-height:8px;letter-spacing:0.14px;">03:00</div></div>
<div style="left:274px;top:189.08px;width:37.6px;height:9.62px;overflow:hidden;border-right:0.7px solid rgba(255,255,255,.55);"><div class="t b" style="right:0.6px;top:1.35px;line-height:8px;letter-spacing:0.14px;">40,00</div></div>
<div style="left:311.6px;top:189.08px;width:48.4px;height:9.62px;overflow:hidden;border-right:0.7px solid rgba(255,255,255,.55);"><div class="t b" style="right:0.8px;top:1.35px;line-height:8px;letter-spacing:0.14px;">120,00</div></div>
<div style="left:360px;top:189.08px;width:99.5px;height:9.62px;overflow:hidden;border-right:0.7px solid rgba(255,255,255,.55);"><div class="t b" style="left:1.2px;top:1.35px;line-height:8px;">Mekanik aksam kontrol edilecek</div></div>
<div style="left:459.5px;top:189.08px;width:64.0px;height:9.62px;overflow:hidden;border-right:0.7px solid rgba(255,255,255,.55);"><div class="t b" style="left:1.2px;top:1.35px;line-height:8px;letter-spacing:0.14px;">11.06.2024</div></div>
<div style="left:523.5px;top:189.08px;width:65.6px;height:9.62px;overflow:hidden;border-right:0.7px solid rgba(255,255,255,.55);"><div class="t b" style="left:1.2px;top:1.35px;line-height:8px;letter-spacing:0.14px;"></div></div>
<div class="" style="left:11.7px;top:198.7px;width:577.2px;height:9.67px;background:#fdbfa3;border-bottom:0.5px solid rgba(255,255,255,.45);"></div>
<div style="left:11.7px;top:198.7px;width:40.0px;height:9.62px;overflow:hidden;border-right:0.7px solid rgba(255,255,255,.55);"><div class="t b" style="left:1.2px;top:1.35px;line-height:8px;">Yapıldı</div></div>
<div style="left:51.7px;top:198.7px;width:40.0px;height:9.62px;overflow:hidden;border-right:0.7px solid rgba(255,255,255,.55);"><div class="t b" style="left:1.2px;top:1.35px;line-height:8px;letter-spacing:0.14px;">006</div></div>
<div style="left:91.7px;top:198.7px;width:134.3px;height:9.62px;overflow:hidden;border-right:0.7px solid rgba(255,255,255,.55);"><div class="t b" style="left:1.2px;top:1.35px;line-height:8px;">Elektronik Aksan Kontrolleri</div></div>
<div style="left:226px;top:198.7px;width:48px;height:9.62px;overflow:hidden;border-right:0.7px solid rgba(255,255,255,.55);"><div class="t b" style="right:0.9px;top:1.35px;line-height:8px;letter-spacing:0.14px;">03:00</div></div>
<div style="left:274px;top:198.7px;width:37.6px;height:9.62px;overflow:hidden;border-right:0.7px solid rgba(255,255,255,.55);"><div class="t b" style="right:0.6px;top:1.35px;line-height:8px;letter-spacing:0.14px;">50,00</div></div>
<div style="left:311.6px;top:198.7px;width:48.4px;height:9.62px;overflow:hidden;border-right:0.7px solid rgba(255,255,255,.55);"><div class="t b" style="right:0.8px;top:1.35px;line-height:8px;letter-spacing:0.14px;">150,00</div></div>
<div style="left:360px;top:198.7px;width:99.5px;height:9.62px;overflow:hidden;border-right:0.7px solid rgba(255,255,255,.55);"><div class="t b" style="left:1.2px;top:1.35px;line-height:8px;">Elektronik aksam kontrol edilecek</div></div>
<div style="left:459.5px;top:198.7px;width:64.0px;height:9.62px;overflow:hidden;border-right:0.7px solid rgba(255,255,255,.55);"><div class="t b" style="left:1.2px;top:1.35px;line-height:8px;letter-spacing:0.14px;">11.06.2024</div></div>
<div style="left:523.5px;top:198.7px;width:65.6px;height:9.62px;overflow:hidden;border-right:0.7px solid rgba(255,255,255,.55);"><div class="t b" style="left:1.2px;top:1.35px;line-height:8px;letter-spacing:0.14px;">11.06.2024 09:42:41</div></div>
<div class="" style="left:11.7px;top:208.32px;width:577.2px;height:9.67px;background:#fdbfa3;border-bottom:0.5px solid rgba(255,255,255,.45);"></div>
<div style="left:11.7px;top:208.32px;width:40.0px;height:9.62px;overflow:hidden;border-right:0.7px solid rgba(255,255,255,.55);"><div class="t b" style="left:1.2px;top:1.35px;line-height:8px;">Yapıldı</div></div>
<div style="left:51.7px;top:208.32px;width:40.0px;height:9.62px;overflow:hidden;border-right:0.7px solid rgba(255,255,255,.55);"><div class="t b" style="left:1.2px;top:1.35px;line-height:8px;letter-spacing:0.14px;">007</div></div>
<div style="left:91.7px;top:208.32px;width:134.3px;height:9.62px;overflow:hidden;border-right:0.7px solid rgba(255,255,255,.55);"><div class="t b" style="left:1.2px;top:1.35px;line-height:8px;">Son incelemeler ve Sonuçlandırma</div></div>
<div style="left:226px;top:208.32px;width:48px;height:9.62px;overflow:hidden;border-right:0.7px solid rgba(255,255,255,.55);"><div class="t b" style="right:0.9px;top:1.35px;line-height:8px;letter-spacing:0.14px;">01:00</div></div>
<div style="left:274px;top:208.32px;width:37.6px;height:9.62px;overflow:hidden;border-right:0.7px solid rgba(255,255,255,.55);"><div class="t b" style="right:0.6px;top:1.35px;line-height:8px;letter-spacing:0.14px;">50,00</div></div>
<div style="left:311.6px;top:208.32px;width:48.4px;height:9.62px;overflow:hidden;border-right:0.7px solid rgba(255,255,255,.55);"><div class="t b" style="right:0.8px;top:1.35px;line-height:8px;letter-spacing:0.14px;">50,00</div></div>
<div style="left:360px;top:208.32px;width:99.5px;height:9.62px;overflow:hidden;border-right:0.7px solid rgba(255,255,255,.55);"><div class="t b" style="left:1.2px;top:1.35px;line-height:8px;">Son incelemeler ve teslimat</div></div>
<div style="left:459.5px;top:208.32px;width:64.0px;height:9.62px;overflow:hidden;border-right:0.7px solid rgba(255,255,255,.55);"><div class="t b" style="left:1.2px;top:1.35px;line-height:8px;letter-spacing:0.14px;">11.06.2024</div></div>
<div style="left:523.5px;top:208.32px;width:65.6px;height:9.62px;overflow:hidden;border-right:0.7px solid rgba(255,255,255,.55);"><div class="t b" style="left:1.2px;top:1.35px;line-height:8px;letter-spacing:0.14px;">11.06.2024 09:42:42</div></div>
<svg style="left:5.8px;top:151.9px" width="4.2" height="7.2" viewBox="0 0 3.6 5.6"><path d="M0.3 0.2L3.4 2.8L0.3 5.4Z" fill="#000"/></svg>
<div class="" style="left:1009.5px;top:140.8px;width:7.9px;height:221px;background:#f0f0f0;"></div>
<div class="" style="left:1017.4px;top:140.8px;width:1.6px;height:221px;background:#e6e6e6;"></div>
<div class="" style="left:1009.5px;top:150.3px;width:7.9px;height:108.2px;background:#c8c8c8;"></div>
<svg style="left:1011.1px;top:144.26px" width="5" height="3.08" viewBox="0 0 6 3.7"><path d="M0.4 3.1L3 0.6L5.6 3.1" fill="none" stroke="#2a2a2a" stroke-width="1.3"/></svg>
<svg style="left:1011.1px;top:356.26px" width="5" height="3.08" viewBox="0 0 6 3.7"><path d="M0.4 0.6L3 3.1L5.6 0.6" fill="none" stroke="#2a2a2a" stroke-width="1.3"/></svg>
<div class="" style="left:432px;top:379.1px;width:587.5px;height:0.7px;background:#ebebeb;"></div>
<div class="" style="left:4.5px;top:363.2px;width:428.2px;height:16.3px;border:0.8px solid #d4d4d4;background:#fff;"></div>
<div class="g" style="left:5px;top:364px;width:51.5px;height:14.5px;"></div>
<div class="t b" style="left:5px;top:367.95px;line-height:8px;width:51.5px;text-align:center;">İşlem Ara</div>
<svg style="left:81.5px;top:368.1px" width="6.6" height="6.6" viewBox="-0.5 -0.5 11 11"><defs><radialGradient id="g174" cx=".55" cy=".7" r=".75"><stop offset="0" stop-color="#dedede"/><stop offset="1" stop-color="#b0b0b0"/></radialGradient></defs><circle cx="5" cy="5" r="5.2" fill="#fff" opacity=".7"/><circle cx="5" cy="5" r="4.600" fill="url(#g174)" stroke="#a0a0a0" stroke-width=".5"/><path d="M3.6 2.600L7.400 5L3.600 7.400Z" fill="#fff"/></svg>
<svg style="left:134.7px;top:368.0px" width="6.8" height="6.8" viewBox="-0.5 -0.5 11 11"><defs><radialGradient id="g175" cx=".55" cy=".7" r=".75"><stop offset="0" stop-color="#3fd23f"/><stop offset="1" stop-color="#0e9c0e"/></radialGradient></defs><circle cx="5" cy="5" r="5.2" fill="#fff" opacity=".7"/><circle cx="5" cy="5" r="4.600" fill="url(#g175)" stroke="#0a7a0a" stroke-width=".5"/><path d="M6.600 2.600L2.800 5L6.600 7.400Z" fill="#fff"/><path d="M5 4.200h2.800v1.600H5z" fill="#fff"/></svg>
<svg style="left:188.4px;top:368.0px" width="6.8" height="6.8" viewBox="-0.5 -0.5 11 11"><defs><radialGradient id="g176" cx=".55" cy=".7" r=".75"><stop offset="0" stop-color="#3fd23f"/><stop offset="1" stop-color="#0e9c0e"/></radialGradient></defs><circle cx="5" cy="5" r="5.2" fill="#fff" opacity=".7"/><circle cx="5" cy="5" r="4.600" fill="url(#g176)" stroke="#0a7a0a" stroke-width=".5"/><path d="M2.600 4.600L5 8L7.400 4.600Z" fill="#fff"/><path d="M4.200 2.200h1.600v3H4.200z" fill="#fff"/></svg>
<svg style="left:242.0px;top:368.0px" width="6.8" height="6.8" viewBox="-0.5 -0.5 11 11"><defs><radialGradient id="g177" cx=".55" cy=".7" r=".75"><stop offset="0" stop-color="#ff5a5a"/><stop offset="1" stop-color="#e00808"/></radialGradient></defs><circle cx="5" cy="5" r="5.2" fill="#fff" opacity=".7"/><circle cx="5" cy="5" r="4.600" fill="url(#g177)" stroke="#b00606" stroke-width=".5"/><rect x="1.800" y="4.100" width="6.400" height="1.800" rx=".6" fill="#fff"/></svg>
<svg style="left:295.3px;top:368.0px" width="6.8" height="6.8" viewBox="-0.5 -0.5 11 11"><defs><radialGradient id="g178" cx=".55" cy=".7" r=".75"><stop offset="0" stop-color="#3fd23f"/><stop offset="1" stop-color="#0e9c0e"/></radialGradient></defs><circle cx="5" cy="5" r="5.2" fill="#fff" opacity=".7"/><circle cx="5" cy="5" r="4.600" fill="url(#g178)" stroke="#0a7a0a" stroke-width=".5"/><path d="M2.600 5.400L5 2L7.400 5.400Z" fill="#fff"/><path d="M4.200 5h1.600v3H4.200z" fill="#fff"/></svg>
<svg style="left:347.6px;top:368.2px" width="9" height="6.400" viewBox="0 0 18 12.800"><path d="M2.400 6.400l4.400 4.200L15.600 2.200" fill="none" stroke="#bdbdbd" stroke-width="2.600"/></svg>
<svg style="left:402.7px;top:368.2px" width="6.6" height="6.6" viewBox="-0.5 -0.5 11 11"><defs><radialGradient id="g180" cx=".55" cy=".7" r=".75"><stop offset="0" stop-color="#dedede"/><stop offset="1" stop-color="#b0b0b0"/></radialGradient></defs><circle cx="5" cy="5" r="5.2" fill="#fff" opacity=".7"/><circle cx="5" cy="5" r="4.600" fill="url(#g180)" stroke="#a0a0a0" stroke-width=".5"/><path d="M3 3l4 4M7 3l-4 4" stroke="#fff" stroke-width="1.500"/></svg>
<div class="t b" style="left:446px;top:363.75px;line-height:8px;">Ücret Toplamı</div>
<div class="" style="left:460.3px;top:371.4px;width:21.5px;height:5.8px;background:#d4d7de;border-radius:2px;filter:blur(0.5px);"></div>
<div class="t b" style="left:460.6px;top:370.65px;line-height:8px;font-size:6.4px;color:#2a2f3c;filter:blur(0.35px);text-shadow:0 0 0.5px #fff,0 0 1.2px #8a90a0;">730,00</div>
<div class="t b" style="left:482.6px;top:370.55px;line-height:8px;">TL</div>
<div class="" style="left:458px;top:381.3px;width:107px;height:3.6px;border:0.6px solid #b9b9b9;background:#fff;"></div>
<div class="" style="left:466px;top:382.7px;width:91.5px;height:0.9px;background:repeating-linear-gradient(90deg,#8088cc 0 0.8px,#e6e8f6 0.8px 1.600px);"></div>
<svg style="left:461.800px;top:382.400px" width="2.600" height="2.200" viewBox="0 0 4 3"><path d="M0 0h4L2 3z" fill="#1c3fb0"/></svg>
<svg style="left:558.600px;top:382.400px" width="2.600" height="2.200" viewBox="0 0 4 3"><path d="M0 0h4L2 3z" fill="#1c3fb0"/></svg>
<div class="" style="left:4.6px;top:397.5px;width:328px;height:122.4px;border:0.8px solid #e8e8e8;"></div>
<div class="" style="left:8px;top:394.3px;width:74px;height:6px;background:#fff;"></div>
<div class="t b" style="left:9.5px;top:393.95px;line-height:8px;">Servis Randevu Bilgileri</div>
<div class="t b" style="right:959.6px;top:406.85px;line-height:8px;letter-spacing:0.12px;">Tarihi/Saati</div>
<div class="in" style="left:73px;top:403.8px;width:83.6px;height:11.6px;"></div>
<div class="t b" style="left:75px;top:405.95px;line-height:8px;letter-spacing:0.14px;">11.06.2024</div>
<svg style="left:147.2px;top:405.6px" width="7" height="8.4" viewBox="0 0 12 15"><rect x="0.8" y="2" width="10.4" height="12" rx="1.4" fill="#fbfbf4" stroke="#8f8f8f" stroke-width="1"/><rect x="0.8" y="2" width="10.4" height="3.4" fill="#e8b83c"/><text x="6" y="12.3" font-size="7.5" text-anchor="middle" font-family="Liberation Sans" font-weight="bold" fill="#555">7</text></svg>
<div class="" style="left:157px;top:403.7px;width:21.9px;height:12px;background:#fff;border:1.1px solid #76b0ec;border-radius:1.2px;"></div>
<div class="t b" style="left:159.2px;top:406.05px;line-height:8px;letter-spacing:0;">12:00</div>
<div class="" style="left:175.3px;top:406.4px;width:0.5px;height:6.6px;background:#000;"></div>
<div class="t b" style="right:959.8px;top:419.15px;line-height:8px;">Özel Kodu</div>
<div class="in" style="left:73px;top:417.3px;width:105.8px;height:10.3px;"></div>
<div class="t b" style="left:75px;top:419.05px;line-height:8px;">001</div>
<svg style="left:168.2px;top:418.9px" width="8.8" height="7.6" viewBox="0 0 17.600 15.200"><rect x="0.500" y="0.500" width="16.600" height="14.200" rx="1.500" fill="#1e2430"/><path d="M2 13V5l2.500-3h3l1 2.500h1l1-2.500h3L16 5v8z" fill="#0c0f16"/><circle cx="8.200" cy="6.800" r="3.600" fill="#35d0e8" stroke="#d8f4fa" stroke-width="1"/><path d="M10.800 9.600l4.600 4.400" stroke="#2438c8" stroke-width="2.200" stroke-linecap="round"/></svg>
<div class="t b" style="right:959.8px;top:431.75px;line-height:8px;">Randevu Durumu</div>
<div class="g" style="left:73px;top:430px;width:105.8px;height:10.2px;"></div>
<div class="t b" style="left:75.6px;top:431.65px;line-height:8px;">Aktif</div>
<svg style="left:171.9px;top:433.6px" width="5.2" height="3.21" viewBox="0 0 6 3.7"><path d="M0.4 0.6L3 3.1L5.6 0.6" fill="none" stroke="#444" stroke-width="1.0"/></svg>
<div style="left:200px;top:404px;width:26.3px;height:26px;overflow:hidden;">
<div class="t b" style="left:9.3px;top:1.4px;line-height:8px;transform-origin:0 50%;transform:scaleX(0.86);">Fiş No</div>
<div class="t b" style="left:8px;top:14.8px;line-height:8px;transform-origin:0 50%;transform:scaleX(0.93);">Grubu</div>
</div>
<div class="in" style="left:226.3px;top:403.7px;width:106.6px;height:12.1px;"></div>
<div class="t b" style="left:228.3px;top:405.45px;line-height:8px;letter-spacing:0.05px;">SRV0001</div>
<div class="in" style="left:226.3px;top:417px;width:106.6px;height:10.9px;"></div>
<div class="t b" style="left:228.3px;top:418.65px;line-height:8px;transform-origin:0 50%;transform:scaleX(0.83);">GENEL</div>
<svg style="left:325.7px;top:420.86px" width="5" height="3.08" viewBox="0 0 6 3.7"><path d="M0.4 0.6L3 3.1L5.6 0.6" fill="none" stroke="#555" stroke-width="1.0"/></svg>
<div class="" style="left:5.5px;top:443.6px;width:327px;height:9.4px;background:#f0f0f0;"></div>
<div class="" style="left:6px;top:444.4px;width:40.5px;height:8.6px;background:#f0f0f0;border:0.7px solid #d9d9d9;border-bottom:none;"></div>
<div class="" style="left:46.8px;top:443.6px;width:98px;height:9.6px;background:#fff;border:0.7px solid #d9d9d9;border-bottom:none;"></div>
<div class="" style="left:145.6px;top:444.4px;width:55px;height:8.6px;background:#f0f0f0;border:0.7px solid #d9d9d9;border-bottom:none;"></div>
<div class="" style="left:200.8px;top:443.6px;width:131.7px;height:9.4px;background:#fff;"></div>
<div class="t b" style="left:7px;top:445.35px;line-height:8px;font-size:6.2px;">Ürün Bilgileri</div>
<div class="t b" style="left:49.5px;top:443.85px;line-height:8px;font-size:6.3px;">Arıza Bilgisi ve Sorumlu Görüşü</div>
<div class="t b" style="left:147px;top:445.35px;line-height:8px;font-size:6.2px;">Ürün Özel Bilgileri</div>
<div class="" style="left:6.2px;top:458.6px;width:325.6px;height:28.5px;border:0.8px solid #e8e8e8;"></div>
<div class="" style="left:10.5px;top:455.6px;width:80px;height:6px;background:#fff;"></div>
<div class="t b" style="left:12px;top:455.25px;line-height:8px;">Müşterinin Bildirdiği Arıza</div>
<div class="in" style="left:7.3px;top:463.5px;width:323.5px;height:22.2px;"></div>
<div class="t n" style="left:10px;top:465.35px;line-height:8px;font-size:5.9px;letter-spacing:-0.14px;color:#000;">Müşteri aracının incelenerek tüm bakım ve onarımının yapılması sağlanacaktır.</div>
<svg style="left:322.3px;top:467.72px" width="4.8" height="2.96" viewBox="0 0 6 3.7"><path d="M0.4 3.1L3 0.6L5.6 3.1" fill="none" stroke="#6e6e6e" stroke-width="1.0"/></svg>
<svg style="left:322.3px;top:479.02px" width="4.8" height="2.96" viewBox="0 0 6 3.7"><path d="M0.4 0.6L3 3.1L5.6 0.6" fill="none" stroke="#6e6e6e" stroke-width="1.0"/></svg>
<div class="t b" style="left:7.2px;top:485.75px;line-height:8px;">Sorumlu Görüşü</div>
<div class="in" style="left:7.3px;top:492.7px;width:323.5px;height:24.3px;"></div>
<div class="t n" style="left:9px;top:494.35px;line-height:8px;font-size:5.9px;letter-spacing:-0.14px;color:#000;">Araç tamamen bakıma alınacak ve değişmesi gereken parçaların değişimi sağlanacaktır.</div>
<svg style="left:322.3px;top:496.52px" width="4.8" height="2.96" viewBox="0 0 6 3.7"><path d="M0.4 3.1L3 0.6L5.6 3.1" fill="none" stroke="#6e6e6e" stroke-width="1.0"/></svg>
<svg style="left:322.3px;top:509.52px" width="4.8" height="2.96" viewBox="0 0 6 3.7"><path d="M0.4 0.6L3 3.1L5.6 0.6" fill="none" stroke="#6e6e6e" stroke-width="1.0"/></svg>
<div class="" style="left:335.5px;top:397.5px;width:202px;height:121.3px;border:0.8px solid #e8e8e8;"></div>
<div class="" style="left:337.5px;top:394.5px;width:78.5px;height:6px;background:#fff;"></div>
<div class="t b" style="left:339px;top:394.15px;line-height:8px;">Servis İşlem Personelleri</div>
<div class="t b" style="right:635.6px;top:406.45px;line-height:8px;">Servis Aracı</div>
<div class="g" style="left:389.8px;top:404.2px;width:89px;height:11px;"></div>
<svg style="left:472.0px;top:408.06px" width="5" height="3.08" viewBox="0 0 6 3.7"><path d="M0.4 0.6L3 3.1L5.6 0.6" fill="none" stroke="#555" stroke-width="1.0"/></svg>
<div class="g" style="left:481.6px;top:404.2px;width:16.8px;height:11.2px;"></div>
<div class="g" style="left:499.8px;top:404.2px;width:16.2px;height:11.2px;"></div>
<div class="g" style="left:517.2px;top:404.2px;width:17px;height:11.2px;"></div>
<svg style="left:484.600px;top:405.200px" width="11" height="9.400" viewBox="0 0 22 18.800"><path d="M2 17.200c3-.6 5 .2 8-.2s5-.4 8 0" fill="none" stroke="#222" stroke-width="1.300"/><path d="M3.400 16l2-4.600 2.600 2.200z" fill="#333"/><path d="M5.400 11.400L12 4.600l2.600 2.200L8 13.600z" fill="#d83a34"/><path d="M10 6.600l2.600 2.200 2-2-2.600-2.200z" fill="#38b0a4"/><path d="M12 4.600l2.600 2.200 2-2.200-2.600-2.200z" fill="#e04038"/><path d="M14 2.400l2.600 2.200 1.600-2.800-1.400-1.200z" fill="#f0c020"/></svg>
<svg style="left:503.5px;top:407px" width="8.6" height="6" viewBox="0 0 17 12"><path d="M1.5 6.5l4.6 4L15.5 1.6" fill="none" stroke="#3dbb2d" stroke-width="2.6"/></svg>
<svg style="left:521.6px;top:406.2px" width="7.4" height="7.4" viewBox="0 0 15 15"><defs><radialGradient id="hq" cx=".4" cy=".3" r=".8"><stop offset="0" stop-color="#8fc0ff"/><stop offset="1" stop-color="#1850c0"/></radialGradient></defs><circle cx="7.5" cy="7.5" r="6.8" fill="url(#hq)" stroke="#143c96" stroke-width=".8"/><text x="7.5" y="11.2" font-size="10" text-anchor="middle" font-family="Liberation Sans" font-weight="bold" fill="#fff">?</text></svg>
<div class="" style="left:353.8px;top:417px;width:183.1px;height:86.8px;border:0.8px solid #cdcdcd;border-left-color:#8f8f8f;background:#fff;"></div>
<div class="" style="left:354.6px;top:417.8px;width:181.5px;height:9.2px;background:#f0f0f0;border-bottom:1.2px solid #c6c6c6;"></div>
<svg style="left:356px;top:420.5px" width="4.4" height="4.6" viewBox="0 0 4.4 4.6"><g fill="#5c6272"><rect x="0.2" y="0.3" width="1.3" height="1.3"/><rect x="2.6" y="0.3" width="1.3" height="1.3"/><rect x="0.2" y="2.8" width="1.3" height="1.3"/><rect x="2.6" y="2.8" width="1.3" height="1.3"/></g></svg>
<div class="t b" style="left:363px;top:418.95px;line-height:8px;">Adı Soyadı</div>
<svg style="left:357px;top:429px" width="4.2" height="7" viewBox="0 0 3.6 5.6"><path d="M0.3 0.2L3.4 2.8L0.3 5.4Z" fill="#000"/></svg>
<div class="" style="left:354.6px;top:436.6px;width:181.5px;height:0.6px;background:#ececec;"></div>
<svg style="left:336px;top:420.3px" width="17.5" height="17.5" viewBox="0 0 36 36">
<path d="M17 5l2.200 3.200 3.600-1.400.6 3.800 3.800.4-1.200 3.600 3.200 2-2.600 2.800 2 3.200-3.600 1.400.2 3.800-3.800-.4-1.600 3.400-3-2.200-3 2.200-1.600-3.400-3.800.4.2-3.800-3.600-1.400 2-3.200-2.600-2.800 3.200-2-1.200-3.600 3.800-.4.6-3.800 3.600 1.400z" fill="#f0d030" stroke="#c8a018" stroke-width=".8" transform="translate(-1.500,1) scale(1.060)"/>
<path d="M12 33.500c0-6.500 3-9 8-9s6 2.500 6 9z" fill="#26245a"/>
<circle cx="20.500" cy="19" r="5.800" fill="#f4bf9c"/>
<path d="M14.300 18.500c.2-7.500 11.500-8.500 12.700 0-2.500-3.500-7.500-4.500-12.700 0z" fill="#1a120c"/>
<path d="M0.500 16.800L20.500 5.200c-1.200-2.800 1-5.200 3.800-5.400l.6 2.800 3.200.4 2-2.400c1.800 2.400 1 5.800-2.200 6.800-1.600.5-3 .1-4-.8L2.500 20.200z" fill="#eef1f5" stroke="#8f99a6" stroke-width=".7"/>
<circle cx="28.500" cy="28.500" r="5.400" fill="#3bb83b" stroke="#1d7f1d" stroke-width=".9"/>
<path d="M25.500 28.500h6M28.500 25.500v6" stroke="#e4f6e4" stroke-width="1.800"/>
</svg>
<div class="" style="left:335.5px;top:503.8px;width:201.3px;height:14.6px;border:0.8px solid #d4d4d4;background:#fff;"></div>
<div class="g" style="left:335.8px;top:504.2px;width:52.2px;height:13.8px;"></div>
<div class="t n" style="left:335.8px;top:508.05px;line-height:8px;width:52.2px;text-align:center;font-size:5.9px;color:#000;-webkit-text-stroke:0.15px #000;">Ekle</div>
<svg style="left:410.0px;top:508.0px" width="6.4" height="6.4" viewBox="-0.5 -0.5 11 11"><defs><radialGradient id="g258" cx=".55" cy=".7" r=".75"><stop offset="0" stop-color="#dedede"/><stop offset="1" stop-color="#b0b0b0"/></radialGradient></defs><circle cx="5" cy="5" r="5.2" fill="#fff" opacity=".7"/><circle cx="5" cy="5" r="4.600" fill="url(#g258)" stroke="#a0a0a0" stroke-width=".5"/><path d="M3.6 2.600L7.400 5L3.600 7.400Z" fill="#fff"/></svg>
<svg style="left:459.2px;top:508.0px" width="6.4" height="6.4" viewBox="-0.5 -0.5 11 11"><defs><radialGradient id="g259" cx=".55" cy=".7" r=".75"><stop offset="0" stop-color="#dedede"/><stop offset="1" stop-color="#b0b0b0"/></radialGradient></defs><circle cx="5" cy="5" r="5.2" fill="#fff" opacity=".7"/><circle cx="5" cy="5" r="4.600" fill="url(#g259)" stroke="#a0a0a0" stroke-width=".5"/><path d="M3 3l4 4M7 3l-4 4" stroke="#fff" stroke-width="1.500"/></svg>
<svg style="left:508.6px;top:508.0px" width="6.4" height="6.4" viewBox="-0.5 -0.5 11 11"><defs><radialGradient id="g260" cx=".55" cy=".7" r=".75"><stop offset="0" stop-color="#dedede"/><stop offset="1" stop-color="#b0b0b0"/></radialGradient></defs><circle cx="5" cy="5" r="5.2" fill="#fff" opacity=".7"/><circle cx="5" cy="5" r="4.600" fill="url(#g260)" stroke="#a0a0a0" stroke-width=".5"/><rect x="1.800" y="4.100" width="6.400" height="1.800" rx=".6" fill="#fff"/></svg>
<div class="" style="left:1.6px;top:521.6px;width:1019.8px;height:22px;background:#f0f0f0;"></div>
<div class="" style="left:1.6px;top:521.6px;width:1019.8px;height:1.2px;background:#e6e6e6;"></div>
<div class="" style="left:1.6px;top:522.8px;width:1019.8px;height:1.6px;background:#fafafa;"></div>
<div class="" style="left:2px;top:524px;width:140px;height:19.2px;background:#e1e1e1;border:0.6px solid #cfcfcf;border-right-color:#c4c4c4;"></div>
<svg style="left:26.1px;top:527.3px" width="12.799999999999999" height="12.799999999999999" viewBox="-1 -1 22 22"><defs><radialGradient id="bg265" cx=".55" cy=".7" r=".75"><stop offset="0" stop-color="#3fd23f"/><stop offset="1" stop-color="#0e9c0e"/></radialGradient></defs><circle cx="10" cy="10" r="10.4" fill="#fff" opacity=".7"/><circle cx="10" cy="10" r="9.4" fill="url(#bg265)" stroke="#0a7a0a" stroke-width=".6"/><ellipse cx="10" cy="5.6" rx="6.4" ry="3.6" fill="#fff" opacity=".18"/><path d="M4 10h12M10 4v12" stroke="#fff" stroke-width="3.6"/></svg>
<div class="t b" style="left:43px;top:528.6px;line-height:11px;font-size:7.6px;letter-spacing:0;word-spacing:0.4px;color:#111;-webkit-text-stroke:0.1px #111;transform-origin:0 50%;transform:scaleX(0.905);">Yeni Servis Randevusu</div>
<svg style="left:222.1px;top:527.0px" width="12.6" height="12.6" viewBox="-1 -1 22 22"><defs><radialGradient id="bg267" cx=".55" cy=".7" r=".75"><stop offset="0" stop-color="#ff5a5a"/><stop offset="1" stop-color="#e00808"/></radialGradient></defs><circle cx="10" cy="10" r="10.4" fill="#fff" opacity=".7"/><circle cx="10" cy="10" r="9.4" fill="url(#bg267)" stroke="#b00606" stroke-width=".6"/><ellipse cx="10" cy="5.6" rx="6.4" ry="3.6" fill="#fff" opacity=".18"/><rect x="3.2" y="8.4" width="13.6" height="3.2" rx="1.2" fill="#fff"/></svg>
<svg style="left:393.8px;top:527.1px" width="12.6" height="12.6" viewBox="-1 -1 22 22"><defs><radialGradient id="bg268" cx=".55" cy=".7" r=".75"><stop offset="0" stop-color="#3fd23f"/><stop offset="1" stop-color="#0e9c0e"/></radialGradient></defs><circle cx="10" cy="10" r="10.4" fill="#fff" opacity=".7"/><circle cx="10" cy="10" r="9.4" fill="url(#bg268)" stroke="#0a7a0a" stroke-width=".6"/><ellipse cx="10" cy="5.6" rx="6.4" ry="3.6" fill="#fff" opacity=".18"/><path d="M6.6 4.4h7v11.400h-7z" fill="#f4f4fa"/><path d="M13.800 3.600L8 15" stroke="#555" stroke-width="1.500"/><path d="M8 15l-.4 1.600 1.400-.9z" fill="#222"/></svg>
<svg style="left:561px;top:527px" width="20" height="14" viewBox="0 0 20 14"><path d="M3.600 5.700L8.700 11.100L17 3.200" fill="none" stroke="#c0c0c0" stroke-width="2.900" stroke-linejoin="miter"/><path d="M9.500 8.500L16.400 2.600" fill="none" stroke="#dcdcdc" stroke-width="0.900"/></svg>
<svg style="left:736.7px;top:527.0px" width="12.6" height="12.6" viewBox="-1 -1 22 22"><defs><radialGradient id="bg270" cx=".55" cy=".7" r=".75"><stop offset="0" stop-color="#d9d9d9"/><stop offset="1" stop-color="#b4b4b4"/></radialGradient></defs><circle cx="10" cy="10" r="10.4" fill="#fff" opacity=".7"/><circle cx="10" cy="10" r="9.4" fill="url(#bg270)" stroke="#a6a6a6" stroke-width=".6"/><ellipse cx="10" cy="5.6" rx="6.4" ry="3.6" fill="#fff" opacity=".18"/><path d="M6 6l8 8M14 6l-8 8" stroke="#fff" stroke-width="2.800"/></svg>
<svg style="left:907.9px;top:527.0px" width="12.6" height="12.6" viewBox="-1 -1 22 22"><defs><radialGradient id="bg271" cx=".55" cy=".7" r=".75"><stop offset="0" stop-color="#3fd23f"/><stop offset="1" stop-color="#0e9c0e"/></radialGradient></defs><circle cx="10" cy="10" r="10.4" fill="#fff" opacity=".7"/><circle cx="10" cy="10" r="9.4" fill="url(#bg271)" stroke="#0a7a0a" stroke-width=".6"/><ellipse cx="10" cy="5.6" rx="6.4" ry="3.6" fill="#fff" opacity=".18"/><path d="M4.600 11.500a5.600 5.600 0 0 1 8.600-6" fill="none" stroke="#fff" stroke-width="2.300"/><path d="M15.800 3.200l-.4 5.400-4.800-2.200z" fill="#fff"/><path d="M15.400 8.500a5.600 5.600 0 0 1-8.600 6" fill="none" stroke="#fff" stroke-width="2.300"/><path d="M4.200 16.800l.4-5.400 4.800 2.200z" fill="#fff"/></svg>
<svg style="left:1005px;top:525.6px" width="11" height="16" viewBox="0 0 22 32"><defs><linearGradient id="upg" x1="0" y1="0" x2="1" y2="0"><stop offset="0" stop-color="#18b018"/><stop offset=".5" stop-color="#067a06"/><stop offset="1" stop-color="#18b018"/></linearGradient></defs><path d="M11 1.500L20.500 15h-5v14.500H6.500V15h-5z" fill="url(#upg)" stroke="#e8f4e8" stroke-width=".8"/></svg>
<div class="" style="left:0px;top:543px;width:1024px;height:1.7px;background:linear-gradient(180deg,#c9c9c9,#b4b4b4);"></div>
<div class="" style="left:1.6px;top:544.7px;width:1020px;height:10.3px;background:#f0f0f0;"></div>
<div class="" style="left:1.6px;top:544.7px;width:1020px;height:1.2px;background:#f7f7f7;"></div>
<div class="" style="left:0px;top:543px;width:1.6px;height:11.9px;background:#a8a6a3;"></div>
<div class="" style="left:1022px;top:543px;width:0.9px;height:11.6px;background:#6f8cc6;"></div>
<div class="" style="left:1022.9px;top:520px;width:1.1px;height:37px;background:#fff;"></div>
<svg style="left:940.6px;top:548.800px" width="5.8" height="6.300" viewBox="0 0 10 10"><path d="M5 0.300L9.700 9.700H0.300Z" fill="#0a48a8"/></svg>
</body></html>
